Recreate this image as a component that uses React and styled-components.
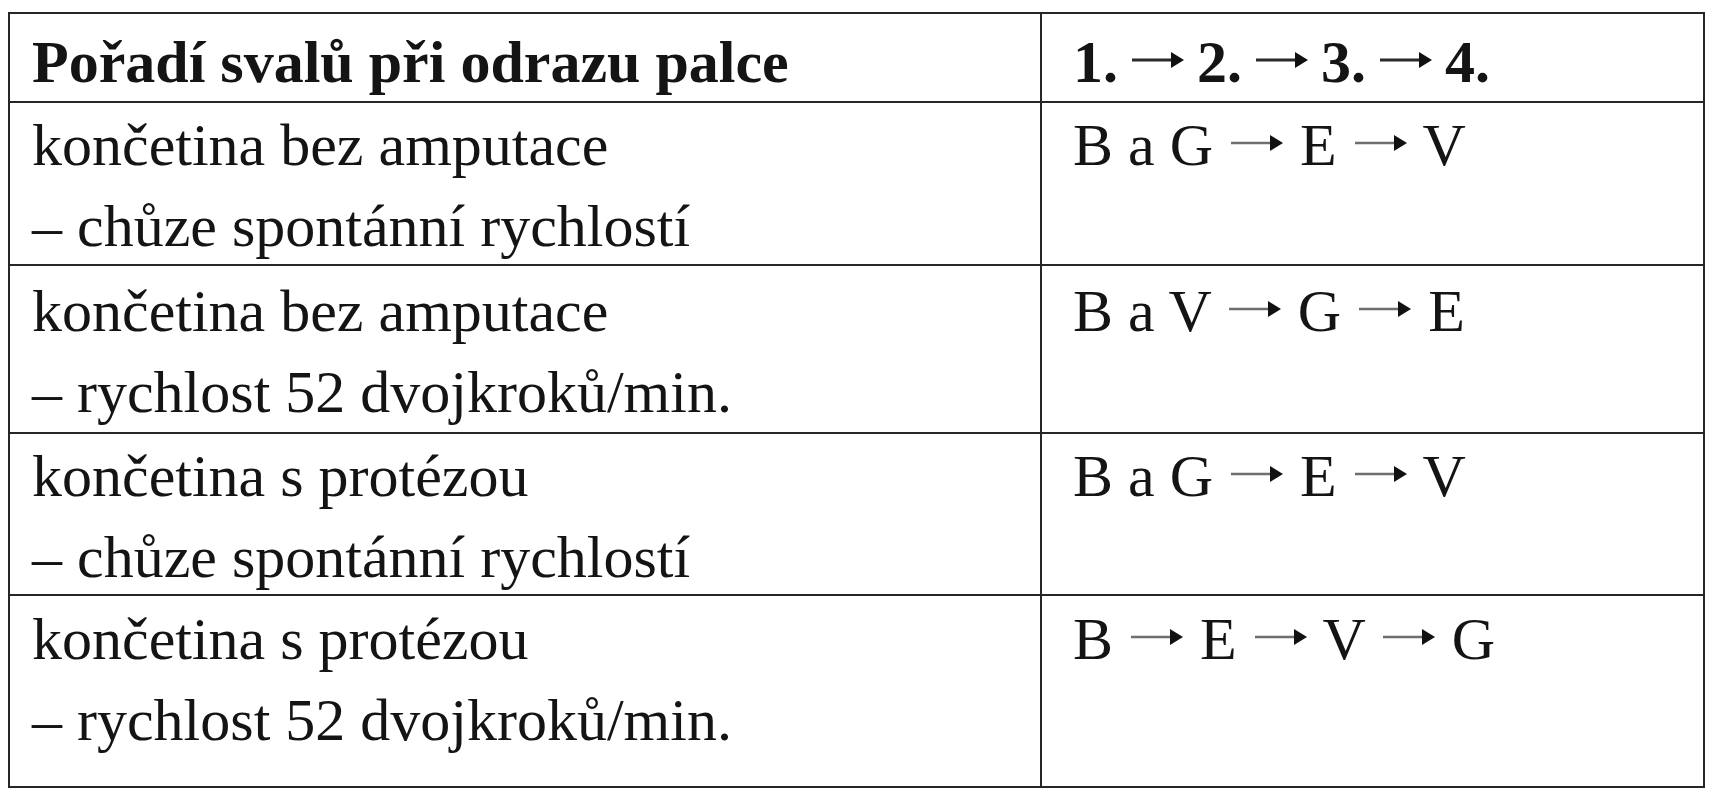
import React from "react";
import styled, { createGlobalStyle } from "styled-components";

const GlobalStyle = createGlobalStyle`
  body {
    margin: 0;
    background: #ffffff;
    font-family: "Liberation Serif", "Times New Roman", serif;
    color: #141414;
  }
`;

const Page = styled.div`
  padding: 12px 0 0 8px;
`;

const Table = styled.div`
  display: grid;
  grid-template-columns: 1032px 1fr;
  grid-template-rows: 89px 163px 168px 162px 190px;
  width: 1697px;
  box-sizing: border-box;
  border: 2px solid #262626;
`;

const Cell = styled.div`
  box-sizing: border-box;
  border-right: ${(p) => (p.$last ? "none" : "2px solid #262626")};
  border-bottom: ${(p) => (p.$bottom ? "none" : "2px solid #262626")};
  padding: ${(p) => p.$top || 2}px 0 0 ${(p) => (p.$right ? 31 : 22)}px;
  font-size: 60px;
  line-height: 81px;
  font-weight: ${(p) => (p.$head ? 700 : 400)};
  white-space: nowrap;
`;

const Line = styled.div``;

const ArrowSvg = styled.svg`
  display: inline-block;
  width: 52px;
  height: 20px;
  vertical-align: 12px;
  margin: ${(p) => (p.$bold ? "0 -2px 0 -1px" : "0 2px 0 3px")};
`;

function Arrow({ bold }) {
  return (
    <ArrowSvg $bold={bold} viewBox="0 0 52 20">
      <line x1="0" y1="10" x2="42" y2="10" stroke={bold ? "#2a2a2a" : "#6e6e6e"} strokeWidth={bold ? 3 : 2.4} />
      <polygon points="39,2 52,10 39,18" fill="#111" />
    </ArrowSvg>
  );
}

function Sequence({ items, bold }) {
  return (
    <>
      {items.map((it, i) => (
        <React.Fragment key={i}>
          {i > 0 && (
            <>
              {" "}
              <Arrow bold={bold} />{" "}
            </>
          )}
          {it}
        </React.Fragment>
      ))}
    </>
  );
}

const rows = [
  { lines: ["končetina bez amputace", "– chůze spontánní rychlostí"], seq: ["B a G", "E", "V"], top: 2 },
  { lines: ["končetina bez amputace", "– rychlost 52 dvojkroků/min."], seq: ["B a V", "G", "E"], top: 5 },
  { lines: ["končetina s protézou", "– chůze spontánní rychlostí"], seq: ["B a G", "E", "V"], top: 2 },
  { lines: ["končetina s protézou", "– rychlost 52 dvojkroků/min."], seq: ["B", "E", "V", "G"], top: 3 },
];

export default function App() {
  return (
    <Page>
      <GlobalStyle />
      <Table>
        <Cell $head $top={8}>Pořadí svalů při odrazu palce</Cell>
        <Cell $head $right $last $top={8}>
          <Sequence items={["1.", "2.", "3.", "4."]} bold />
        </Cell>
        {rows.map((r, i) => (
          <React.Fragment key={i}>
            <Cell $top={r.top} $bottom={i === rows.length - 1}>
              {r.lines.map((l) => (
                <Line key={l}>{l}</Line>
              ))}
            </Cell>
            <Cell $right $last $top={r.top} $bottom={i === rows.length - 1}>
              <Sequence items={r.seq} />
            </Cell>
          </React.Fragment>
        ))}
      </Table>
    </Page>
  );
}
